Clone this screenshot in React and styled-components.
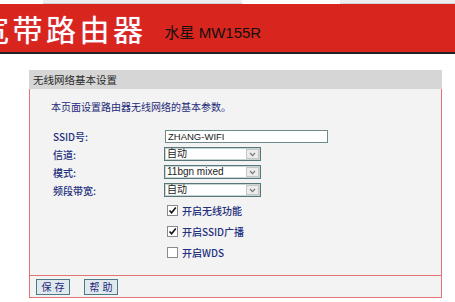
import React from "react";
import styled, { createGlobalStyle } from "styled-components";

const GlobalStyle = createGlobalStyle`
  html, body {
    margin: 0;
    padding: 0;
    background: #ffffff;
    overflow: hidden;
  }
  body {
    font-family: "Noto Sans CJK SC", "Liberation Sans", sans-serif;
  }
`;

const Page = styled.div`
  width: 455px;
  height: 302px;
  overflow: hidden;
`;

const TopStrip = styled.div`
  height: 4px;
  display: flex;
  background: #ffffff;
`;

const Tab = styled.div`
  width: ${(p) => p.w}px;
  margin-left: ${(p) => p.gap}px;
  height: 3px;
  background: #ededed;
  border-bottom: 1px solid #d4d4d4;
`;

const Banner = styled.div`
  height: 48px;
  background: #d8251d;
  border-bottom: 2px solid #222;
  display: flex;
  align-items: center;
  overflow: hidden;
`;

const BigTitle = styled.span`
  margin-left: -21px;
  font-family: "Noto Sans CJK SC", sans-serif;
  font-size: 30px;
  font-weight: 400;
  letter-spacing: 3.5px;
  color: #ffffff;
  text-shadow: 0 0 1px #f0a0d0;
  white-space: nowrap;
`;

const Model = styled.span`
  margin-left: 18px;
  margin-top: 7px;
  font-family: "Liberation Sans", "Noto Sans CJK SC", sans-serif;
  font-size: 15px;
  color: #111;
  white-space: nowrap;
`;

const Main = styled.div`
  padding: 16px 0 0 29px;
`;

const Panel = styled.div`
  width: 413px;
`;

const PanelHeader = styled.div`
  height: 19px;
  line-height: 19px;
  background: #d6d6d6;
  padding-left: 4px;
  font-size: 10.5px;
  color: #2a2a2a;
`;

const PanelBody = styled.div`
  height: 175px;
  padding: 11px 0 0 21px;
  background: #f3f3f3;
  border-left: 1px solid #e47474;
  border-right: 1px solid #e47474;
`;

const Desc = styled.div`
  height: 14px;
  line-height: 14px;
  font-size: 10px;
  color: #1d2a78;
  white-space: nowrap;
`;

const Form = styled.div`
  margin-top: 13px;
  display: grid;
  grid-template-columns: 113px auto;
  grid-auto-rows: 18px;
  align-items: center;
`;

const Label = styled.div`
  padding-left: 2px;
  font-size: 10px;
  font-weight: 500;
  color: #23307e;
  white-space: nowrap;
`;

const TextInput = styled.div`
  margin-left: 1px;
  width: 157px;
  height: 11px;
  line-height: 11px;
  padding: 0 2px;
  background: #fff;
  border: 1px solid #6c8c8c;
  font-family: "Liberation Sans", sans-serif;
  font-size: 9.5px;
  color: #222;
`;

const Select = styled.div`
  width: 95px;
  height: 12px;
  display: flex;
  background: #fff;
  border: 1px solid #577878;
  box-shadow: inset 0 0 0 1px #c9d4d4;
`;

const SelectText = styled.span`
  flex: 1;
  padding-left: 2px;
  line-height: 12px;
  font-family: "Liberation Sans", "Noto Sans CJK SC", sans-serif;
  font-size: 10px;
  color: #222;
  white-space: nowrap;
`;

const Arrow = styled.span`
  width: 13px;
  height: 10px;
  margin: 1px 1px 0 0;
  display: flex;
  align-items: center;
  justify-content: center;
  background: #ececec;
  border: 1px solid #c6c6c6;
  box-sizing: border-box;
`;

const Checks = styled.div`
  display: grid;
  grid-auto-rows: 21px;
  align-items: center;
  padding-left: 116px;
  margin-top: 1px;
`;

const CheckRow = styled.div`
  display: flex;
  align-items: center;
  gap: 4px;
`;

const Box = styled.span`
  width: 9px;
  height: 9px;
  background: #fff;
  border: 1px solid #8a8a8a;
  display: flex;
  align-items: center;
  justify-content: center;
`;

const CheckText = styled.span`
  font-size: 10px;
  font-weight: 500;
  color: #23307e;
  white-space: nowrap;
`;

const Footer = styled.div`
  height: 21px;
  display: flex;
  align-items: center;
  gap: 14px;
  padding-left: 6px;
  background: #f3f3f3;
  border: 1px solid #e47474;
`;

const Button = styled.button`
  width: 34px;
  height: 16px;
  padding: 0;
  background: #e0e9ee;
  border: 1px solid #4b7a86;
  font-family: "Noto Sans CJK SC", sans-serif;
  font-size: 10px;
  letter-spacing: 3px;
  text-indent: 3px;
  color: #1d2a78;
  line-height: 14px;
`;

const Chevron = () => (
  <svg width="7" height="5" viewBox="0 0 7 5">
    <path d="M1 1 L3.5 3.6 L6 1" fill="none" stroke="#777" strokeWidth="1.2" />
  </svg>
);

const Tick = () => (
  <svg width="9" height="9" viewBox="0 0 9 9">
    <path d="M1.5 4.5 L3.6 6.8 L7.8 1.6" fill="none" stroke="#111" strokeWidth="1.6" />
  </svg>
);

const selects = [
  { label: "信道:", value: "自动" },
  { label: "模式:", value: "11bgn mixed" },
  { label: "频段带宽:", value: "自动" },
];

const checks = [
  { text: "开启无线功能", on: true },
  { text: "开启SSID广播", on: true },
  { text: "开启WDS", on: false },
];

export default function App() {
  return (
    <Page>
      <GlobalStyle />
      <TopStrip>
        <Tab w={100} gap={43} />
        <Tab w={99} gap={0} />
        <Tab w={97} gap={98} />
        <Tab w={18} gap={0} />
      </TopStrip>
      <Banner>
        <BigTitle>宽带路由器</BigTitle>
        <Model>水星 MW155R</Model>
      </Banner>
      <Main>
        <Panel>
          <PanelHeader>无线网络基本设置</PanelHeader>
          <PanelBody>
            <Desc>本页面设置路由器无线网络的基本参数。</Desc>
            <Form>
              <Label>SSID号:</Label>
              <TextInput>ZHANG-WIFI</TextInput>
              {selects.map((s) => (
                <React.Fragment key={s.label}>
                  <Label>{s.label}</Label>
                  <Select>
                    <SelectText>{s.value}</SelectText>
                    <Arrow>
                      <Chevron />
                    </Arrow>
                  </Select>
                </React.Fragment>
              ))}
            </Form>
            <Checks>
              {checks.map((c) => (
                <CheckRow key={c.text}>
                  <Box>{c.on && <Tick />}</Box>
                  <CheckText>{c.text}</CheckText>
                </CheckRow>
              ))}
            </Checks>
          </PanelBody>
          <Footer>
            <Button>保存</Button>
            <Button>帮助</Button>
          </Footer>
        </Panel>
      </Main>
    </Page>
  );
}
